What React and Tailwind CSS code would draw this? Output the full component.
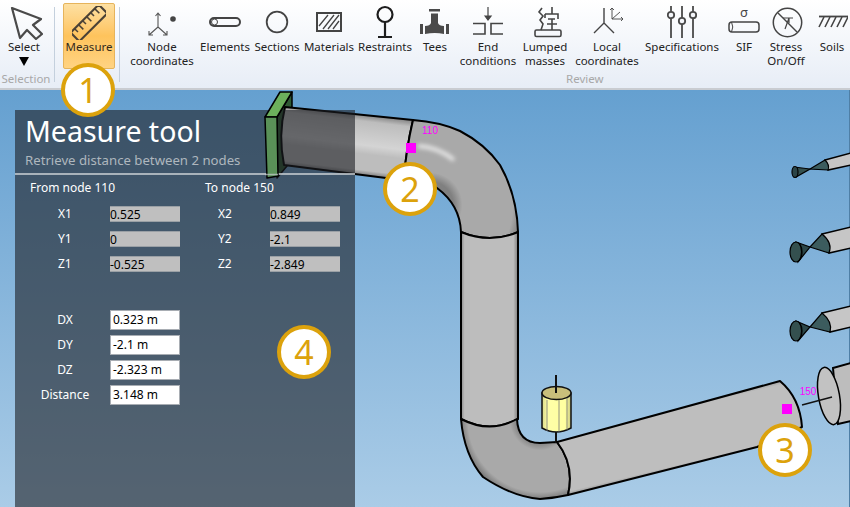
const font = { fontFamily: '"Noto Sans", sans-serif' };

function Arrow() {
  return (
    <svg width="34" height="34" viewBox="0 0 34 34" fill="none" stroke="#4a4a4a" strokeWidth="2.2" strokeLinejoin="round">
      <path d="M3 2 L32 13 L24 19 L33 28 L27 33 L18 24 L11 32 Z" />
    </svg>
  );
}

function Ruler() {
  return (
    <svg width="34" height="34" viewBox="0 0 36 36" fill="none" stroke="#4b4236" strokeWidth="2.2">
      <g transform="rotate(-45 18 18)">
        <rect x="-3" y="11.5" width="42" height="13" rx="1" />
        <path d="M3 11.5v5M9 11.5v7M15 11.5v5M21 11.5v7M27 11.5v5M33 11.5v7" strokeWidth="1.6" />
      </g>
    </svg>
  );
}

function NodeCoords() {
  return (
    <svg width="40" height="32" viewBox="0 0 40 32" fill="none" stroke="#555" strokeWidth="1.1">
      <path d="M16 21V7M13.5 10l2.5-3 2.5 3M16 21L7 29M7 25v4h4M16 21l9 8M25 25v4h-4" />
      <circle cx="31" cy="13" r="2.8" fill="#444" stroke="none" />
    </svg>
  );
}

function Elements() {
  return (
    <svg width="32" height="14" viewBox="0 0 32 14" fill="none" stroke="#444" strokeWidth="2">
      <rect x="1" y="3" width="30" height="8" rx="4" />
      <circle cx="5.5" cy="7" r="3" strokeWidth="1" />
    </svg>
  );
}

function Sections() {
  return (
    <svg width="24" height="24" viewBox="0 0 24 24" fill="none" stroke="#444" strokeWidth="1.8">
      <circle cx="12" cy="12" r="10.3" />
    </svg>
  );
}

function Materials() {
  return (
    <svg width="26" height="20" viewBox="0 0 26 20" fill="none" stroke="#444">
      <rect x="1" y="1" width="24" height="18" strokeWidth="2" />
      <path d="M3 14L12 3M7 17L18 3M12 17L23 3M17 17L23 9" strokeWidth="1.3" />
    </svg>
  );
}

function Restraints() {
  return (
    <svg width="22" height="34" viewBox="0 0 22 34" fill="none" stroke="#1d1d1d" strokeWidth="2.2">
      <circle cx="11" cy="9.5" r="7.5" />
      <path d="M11 17V31M4 32H18" />
    </svg>
  );
}

function Tees() {
  return (
    <svg width="32" height="26" viewBox="0 0 32 26" fill="#4a4a4a">
      <rect x="10" y="0" width="11" height="2.5" />
      <path d="M12 4.5H19V14Q20 17 25 17V25Q16 23 6 25V17Q11 17 12 14Z" />
      <rect x="1" y="15" width="3" height="10" />
      <rect x="27" y="15" width="3" height="10" />
    </svg>
  );
}

function EndConditions() {
  return (
    <svg width="32" height="30" viewBox="0 0 32 30" fill="none" stroke="#444" strokeWidth="1.2">
      <path d="M16 0V12" />
      <path d="M13 9l3 4 3-4z" fill="#444" />
      <path d="M1 16.5H13V27H1M31 16.5H19V27H31" strokeWidth="1.6" />
    </svg>
  );
}

function LumpedMasses() {
  return (
    <svg width="28" height="31" viewBox="0 0 28 31" fill="none" stroke="#444" strokeWidth="1.6" className="ml-[6px]">
      <rect x="1" y="23" width="26" height="6.5" rx="1.5" />
      <path d="M8 1L5 5L9 9L6 13L9 17L7 23" />
      <path d="M18 0V7M11 7H24V12M11 7V11M14 12H21M18 12V23M13 17H23" />
    </svg>
  );
}

function LocalCoords() {
  return (
    <svg width="32" height="30" viewBox="0 0 32 30" fill="none" stroke="#444" className="ml-[4px]">
      <path d="M11 1V16M11 16L1 26M11 16L21 26" strokeWidth="1.4" />
      <path d="M19 1V12H30M17 3l2-2 2 2M28 10l2 2-2 2M19 12L27 5" strokeWidth="0.9" />
    </svg>
  );
}

function Specifications() {
  return (
    <svg width="30" height="33" viewBox="0 0 30 33" fill="#f4f6fa" stroke="#4a4a4a" strokeWidth="1.8">
      <path d="M4 0V32M15 0V32M26 0V32" />
      <circle cx="4" cy="9" r="3.2" />
      <circle cx="15" cy="15" r="3.2" />
      <circle cx="26" cy="9" r="3.2" />
    </svg>
  );
}

function Sif() {
  return (
    <svg width="32" height="38" viewBox="0 0 32 38" fill="none" stroke="#444" strokeWidth="1.5">
      <text x="16" y="14" textAnchor="middle" fontSize="13" fill="#444" stroke="none" style={font}>σ</text>
      <rect x="1" y="19" width="30" height="10" rx="3" />
      <path d="M3.5 19Q6 24 3.5 29" strokeWidth="1" />
    </svg>
  );
}

function StressToggle() {
  return (
    <svg width="31" height="31" viewBox="0 0 31 31" fill="none" stroke="#444" strokeWidth="1.5" className="ml-[3px]">
      <circle cx="15.5" cy="15.5" r="14.2" />
      <path d="M6 6L25 25" />
      <path d="M11 11H21M17 11V16M17 11L13 22" strokeWidth="1.2" />
    </svg>
  );
}

function Soils() {
  return (
    <svg width="30" height="14" viewBox="0 0 30 14" fill="none" stroke="#444" className="ml-[2px]">
      <path d="M1 1.5H30" strokeWidth="1.8" />
      <path d="M6 2L1 12M12 2L7 12M18 2L13 12M24 2L19 12M30 2L25 12" strokeWidth="1.6" />
    </svg>
  );
}

const tools = [
  { lines: ["Node", "coordinates"], icon: <NodeCoords />, w: "w-[64px]" },
  { lines: ["Elements"], icon: <Elements />, w: "w-[62px]" },
  { lines: ["Sections"], icon: <Sections />, w: "w-[42px]" },
  { lines: ["Materials"], icon: <Materials />, w: "w-[62px]" },
  { lines: ["Restraints"], icon: <Restraints />, w: "w-[50px]" },
  { lines: ["Tees"], icon: <Tees />, w: "w-[50px]" },
  { lines: ["End", "conditions"], icon: <EndConditions />, w: "w-[56px]" },
  { lines: ["Lumped", "masses"], icon: <LumpedMasses />, w: "w-[58px]" },
  { lines: ["Local", "coordinates"], icon: <LocalCoords />, w: "w-[66px]" },
  { lines: ["Specifications"], icon: <Specifications />, w: "w-[84px]" },
  { lines: ["SIF"], icon: <Sif />, w: "w-[40px]" },
  { lines: ["Stress", "On/Off"], icon: <StressToggle />, w: "w-[44px]" },
  { lines: ["Soils"], icon: <Soils />, w: "w-[48px]" },
];

function Tool({ lines, icon, w }) {
  return (
    <div className={`flex shrink-0 flex-col items-center ${w}`}>
      <div className="flex h-[34px] items-center justify-center">{icon}</div>
      <div className="mt-[1px] whitespace-nowrap text-center text-[11.5px] leading-[14px] text-[#222]">
        {lines.map((l) => (
          <div key={l}>{l}</div>
        ))}
      </div>
    </div>
  );
}

function Toolbar() {
  return (
    <div className="flex h-[90px] shrink-0 border-b-2 border-[#c9ccd1] bg-gradient-to-b from-white to-[#e7edf6]">
      <div className="flex w-[54px] shrink-0 flex-col items-center pr-[6px]">
        <div className="flex h-[40px] w-[48px] items-end justify-center pl-[3px]">
          <Arrow />
        </div>
        <div className="text-[11.5px] leading-[14px] text-[#222]">Select</div>
        <svg width="10" height="9" viewBox="0 0 10 9" className="mt-[3px]">
          <path d="M0 0H10L5 9Z" fill="#000" />
        </svg>
        <div className="ml-[4px] mt-[6px] text-[11.5px] leading-[14px] text-[#a8a8a8]">Selection</div>
      </div>
      <div className="mt-[7px] h-[75px] w-px shrink-0 bg-[#c4d0dd]" />
      <div className="ml-[8px] mt-[3px] flex h-[66px] w-[52px] shrink-0 flex-col items-center rounded-[2px] border border-[#e6b45c] bg-gradient-to-b from-[#fde0a2] via-[#fec35c] to-[#ffd382]">
        <div className="flex h-[36px] items-end">
          <Ruler />
        </div>
        <div className="text-[11.5px] leading-[14px] text-[#33291a]">Measure</div>
      </div>
      <div className="ml-[4px] mt-[7px] h-[75px] w-px shrink-0 bg-[#c4d0dd]" />
      <div className="flex min-w-0 flex-1 flex-col overflow-hidden pl-[10px] pt-[5px]">
        <div className="flex h-[67px]">
          {tools.map((t) => (
            <Tool key={t.lines[0]} {...t} />
          ))}
        </div>
        <div className="pl-[436px] text-[11.5px] leading-[14px] text-[#a8a8a8]">Review</div>
      </div>
    </div>
  );
}

function Scene() {
  return (
    <svg className="absolute inset-0" width="850" height="417" viewBox="0 90 850 417" fill="none">
      <defs>
        <linearGradient id="vert" x1="460" x2="518" y1="0" y2="0" gradientUnits="userSpaceOnUse">
          <stop offset="0" stopColor="#7c7c7c" />
          <stop offset="0.08" stopColor="#bdbdbd" />
          <stop offset="0.92" stopColor="#bdbdbd" />
          <stop offset="1" stopColor="#7c7c7c" />
        </linearGradient>
        <linearGradient id="upper" x1="345" y1="113" x2="338" y2="172" gradientUnits="userSpaceOnUse">
          <stop offset="0" stopColor="#8a8a8a" />
          <stop offset="0.1" stopColor="#bdbdbd" />
          <stop offset="0.5" stopColor="#d4d4d4" />
          <stop offset="0.65" stopColor="#bdbdbd" />
          <stop offset="0.92" stopColor="#bdbdbd" />
          <stop offset="1" stopColor="#808080" />
        </linearGradient>
        <linearGradient id="lower" x1="660" y1="410" x2="675" y2="472" gradientUnits="userSpaceOnUse">
          <stop offset="0" stopColor="#a0a0a0" />
          <stop offset="0.06" stopColor="#bebebe" />
          <stop offset="0.9" stopColor="#bebebe" />
          <stop offset="1" stopColor="#777" />
        </linearGradient>
        <radialGradient id="elbowTop" cx="430" cy="205" r="90" gradientUnits="userSpaceOnUse">
          <stop offset="0.26" stopColor="#808080" />
          <stop offset="0.36" stopColor="#a9a9a9" />
          <stop offset="0.92" stopColor="#a9a9a9" />
          <stop offset="1" stopColor="#8a8a8a" />
        </radialGradient>
        <radialGradient id="elbowLow" cx="540" cy="420" r="80" gradientUnits="userSpaceOnUse">
          <stop offset="0.28" stopColor="#808080" />
          <stop offset="0.38" stopColor="#a9a9a9" />
          <stop offset="0.9" stopColor="#a9a9a9" />
          <stop offset="1" stopColor="#777" />
        </radialGradient>
        <linearGradient id="yellow" x1="542" x2="571" y1="0" y2="0" gradientUnits="userSpaceOnUse">
          <stop offset="0" stopColor="#d8d888" />
          <stop offset="0.2" stopColor="#ffffa8" />
          <stop offset="0.8" stopColor="#ffffa0" />
          <stop offset="1" stopColor="#c8c880" />
        </linearGradient>
        <filter id="soft" x="-30%" y="-100%" width="160%" height="300%">
          <feGaussianBlur stdDeviation="2" />
        </filter>
      </defs>

      {/* flange side, behind the pipe */}
      <path d="M277 117L292 92V160L277 178Z" fill="#2f5a33" stroke="#000" strokeWidth="1.5" strokeLinejoin="round" />

      {/* upper pipe and first elbow */}
      <path d="M285 107L413 120Q406 150 404 178L386 178L284 165Q278 135 285 107Z" fill="url(#upper)" stroke="#000" strokeWidth="2" strokeLinejoin="round" />
      <path d="M413 120Q440 122 460 131Q485 144 500 165Q517 195 518 232Q490 244 461 232Q460 205 437 188Q425 180 404 178Q406 150 413 120Z" fill="url(#elbowTop)" stroke="#000" strokeWidth="2" strokeLinejoin="round" />
      <path d="M418 146Q438 147 454 160" stroke="#e8e8e8" strokeWidth="4" filter="url(#soft)" />

      {/* vertical pipe */}
      <path d="M461 232Q490 244 518 232V419Q490 434 461 419Z" fill="url(#vert)" stroke="#000" strokeWidth="2" />

      {/* second elbow */}
      <path d="M461 419Q490 434 517 419Q518 443 540 443L557 442Q575 465 568 495Q555 498 540 499Q513 497 483 477Q464 455 461 419Z" fill="url(#elbowLow)" stroke="#000" strokeWidth="2" strokeLinejoin="round" />

      {/* yellow support */}
      <path d="M556 375V443" stroke="#111" strokeWidth="2" />
      <path d="M542 393V428Q556 436 571 428V393Z" fill="url(#yellow)" stroke="#111" strokeWidth="1.5" />
      <ellipse cx="556.5" cy="393" rx="14.5" ry="6.5" fill="#c9bf7b" stroke="#111" strokeWidth="1.5" />
      <path d="M547 400V431M559 400V432M567 398V430" stroke="#777" strokeWidth="0.8" />
      <path d="M556 375V393" stroke="#111" strokeWidth="2" />

      {/* lower pipe */}
      <path d="M557 442L780 381Q800 398 802 427L757 447L568 495Q575 465 557 442Z" fill="url(#lower)" stroke="#000" strokeWidth="2" strokeLinejoin="round" />

      {/* right side stub and rod */}
      <path d="M833 368L851 363V421L838 424Z" fill="#bdbdbd" stroke="#000" strokeWidth="2" />
      <ellipse cx="829" cy="396" rx="10.5" ry="29" transform="rotate(-10 829 396)" fill="#c2c2c2" stroke="#000" strokeWidth="1.5" />
      <path d="M802 405L832 397" stroke="#111" strokeWidth="1.5" />

      {/* upper small pipe */}
      <path d="M825 160L851 153V165L828 170Z" fill="#c6c6c6" stroke="#000" strokeWidth="1.5" />
      <path d="M810 169L825 160Q830 165 828 170Z" fill="#3c5c5e" stroke="#000" strokeWidth="1.2" />
      <path d="M794 167L810 169L796 177Z" fill="#34504f" stroke="#000" strokeWidth="1.2" />
      <ellipse cx="795" cy="172" rx="3" ry="5.5" fill="#2b4447" stroke="#000" strokeWidth="1.2" />

      {/* middle small pipe */}
      <path d="M822 234L851 227V248L829 253Z" fill="#c6c6c6" stroke="#000" strokeWidth="1.5" />
      <path d="M810 247L822 234Q833 243 829 253Z" fill="#3c5c5e" stroke="#000" strokeWidth="1.2" />
      <path d="M796 242L810 247L798 262Z" fill="#2c4648" stroke="#000" strokeWidth="1.2" />
      <ellipse cx="796" cy="252" rx="6" ry="10" fill="#34504f" stroke="#000" strokeWidth="1.2" />
      <path d="M799 243Q804 252 799 261" stroke="#000" strokeWidth="1" />

      {/* lower small pipe */}
      <path d="M822 313L851 306V327L830 332Z" fill="#c6c6c6" stroke="#000" strokeWidth="1.5" />
      <path d="M810 327L822 313Q833 322 830 332Z" fill="#3c5c5e" stroke="#000" strokeWidth="1.2" />
      <path d="M796 321L810 327L798 341Z" fill="#2c4648" stroke="#000" strokeWidth="1.2" />
      <ellipse cx="796" cy="331" rx="6" ry="10" fill="#34504f" stroke="#000" strokeWidth="1.2" />
      <path d="M799 322Q804 331 799 340" stroke="#000" strokeWidth="1" />

      {/* node markers */}
      <rect x="406" y="143" width="10" height="10" fill="#ff00ff" />
      <rect x="782" y="404" width="10" height="10" fill="#ff00ff" />
      <text x="430" y="134" textAnchor="middle" fontSize="10" fill="#ff00ff" style={{ fontFamily: '"Liberation Sans", sans-serif' }}>110</text>
      <text x="808" y="395" textAnchor="middle" fontSize="10" fill="#ff00ff" style={{ fontFamily: '"Liberation Sans", sans-serif' }}>150</text>
    </svg>
  );
}

// the green flange faces sit on top of the translucent panel in the reference
function FlangeFront() {
  return (
    <svg className="absolute inset-0" width="850" height="417" viewBox="0 90 850 417" fill="none">
      <path d="M265 117L280 92H292L277 117Z" fill="#6cb05c" stroke="#000" strokeWidth="1.5" strokeLinejoin="round" />
      <path d="M265 117H277L278 176L267 178Z" fill="#5a9158" stroke="#000" strokeWidth="1.5" strokeLinejoin="round" />
      <path d="M265 174.5H278" stroke="#c4cad0" strokeWidth="1.5" opacity="0.7" />
    </svg>
  );
}

function Callout({ n, className }) {
  return (
    <div className={`absolute flex h-[54px] w-[54px] items-center justify-center rounded-full border-4 border-[#dca20c] bg-white text-[34px] leading-none text-[#dca20c] ${className}`}>
      {n}
    </div>
  );
}

function CoordRow({ label, value, right }) {
  return (
    <div className="flex h-[16px] items-center">
      <div className={`${right ? "w-[55px] pl-[3px]" : "w-[65px] pl-[13px]"} shrink-0 text-[12px] text-white`}>
        {label}
      </div>
      <div className="h-[16px] w-[70px] border-t border-b border-t-[#9aa0a5] border-b-[#9aa0a5] bg-[#bfbfbf] text-[12px] leading-[15px] text-black">
        {value}
      </div>
    </div>
  );
}

function DeltaRow({ label, value }) {
  return (
    <div className="flex h-[20px] items-center">
      <div className="w-[95px] shrink-0 pl-[5px] text-center text-[12px] text-white">{label}</div>
      <div className="h-[20px] w-[70px] border border-[#a8adb3] bg-white pl-[2px] text-[12px] leading-[18px] text-black">
        {value}
      </div>
    </div>
  );
}

function Panel() {
  const left = [["X1", "0.525"], ["Y1", "0"], ["Z1", "-0.525"]];
  const right = [["X2", "0.849"], ["Y2", "-2.1"], ["Z2", "-2.849"]];
  const deltas = [["DX", "0.323 m"], ["DY", "-2.1 m"], ["DZ", "-2.323 m"], ["Distance", "3.148 m"]];
  return (
    <div className="absolute bottom-0 left-[15px] top-[20px] w-[340px] bg-[#1c1e23]/60">
      <div className="h-[65px] border-b-2 border-[#c4cad0]/80 pl-[10px]">
        <div className="pt-[2px] text-[28.5px] leading-[38px] text-white">Measure tool</div>
        <div className="pt-[2px] text-[13.2px] leading-[16px] text-[#aeb7be]">Retrieve distance between 2 nodes</div>
      </div>
      <div className="flex pl-[15px] pt-[5px] text-[12px] leading-[16px] text-white">
        <div className="w-[175px]">From node 110</div>
        <div>To node 150</div>
      </div>
      <div className="mt-[10px] flex">
        <div className="flex w-[180px] flex-col gap-[9px] pl-[30px]">
          {left.map(([l, v]) => (
            <CoordRow key={l} label={l} value={v} />
          ))}
        </div>
        <div className="flex flex-col gap-[9px] pl-[20px]">
          {right.map(([l, v]) => (
            <CoordRow key={l} label={l} value={v} right />
          ))}
        </div>
      </div>
      <div className="mt-[38px] flex flex-col gap-[5px]">
        {deltas.map(([l, v]) => (
          <DeltaRow key={l} label={l} value={v} />
        ))}
      </div>
    </div>
  );
}

export default function App() {
  return (
    <div className="relative flex h-[507px] w-[850px] flex-col overflow-hidden" style={font}>
      <Toolbar />
      <div className="relative flex-1 border-r border-[#4f7fa6] bg-gradient-to-b from-[#65a0d0] to-[#aacce7]">
        <Scene />
        <Panel />
        <FlangeFront />
      </div>
      <Callout n="1" className="left-[61px] top-[63px]" />
      <Callout n="2" className="left-[383px] top-[162px]" />
      <Callout n="3" className="left-[758px] top-[423px]" />
      <Callout n="4" className="left-[277px] top-[325px]" />
    </div>
  );
}
